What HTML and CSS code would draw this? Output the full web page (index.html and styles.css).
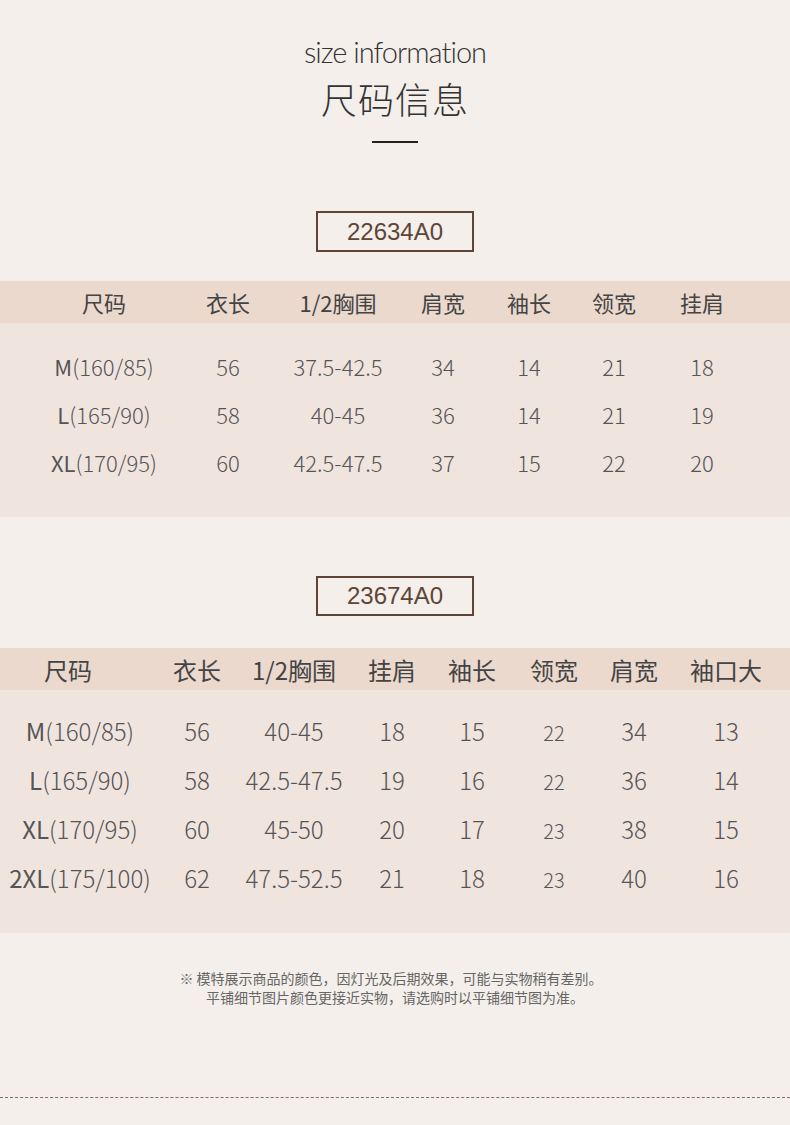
FILE: index.html
```html
<!DOCTYPE html>
<html lang="zh">
<head>
<meta charset="utf-8">
<link rel="stylesheet" href="styles.css">
</head>
<body>
<div class="page">
  <header class="title">
    <div class="en">size information</div>
    <div class="cn">尺码信息</div>
    <div class="rule"></div>
  </header>

  <section class="block block1">
    <div class="code"><span>22634A0</span></div>
    <div class="thead t1">
      <div>尺码</div><div>衣长</div><div>1/2胸围</div><div>肩宽</div><div>袖长</div><div>领宽</div><div>挂肩</div>
    </div>
    <div class="tbody b1">
      <div class="row t1"><div><b>M</b>(160/85)</div><div>56</div><div>37.5-42.5</div><div>34</div><div>14</div><div>21</div><div>18</div></div>
      <div class="row t1"><div><b>L</b>(165/90)</div><div>58</div><div>40-45</div><div>36</div><div>14</div><div>21</div><div>19</div></div>
      <div class="row t1"><div><b>XL</b>(170/95)</div><div>60</div><div>42.5-47.5</div><div>37</div><div>15</div><div>22</div><div>20</div></div>
    </div>
  </section>

  <section class="block block2">
    <div class="code"><span>23674A0</span></div>
    <div class="thead t2">
      <div class="first">尺码</div><div>衣长</div><div>1/2胸围</div><div>挂肩</div><div>袖长</div><div>领宽</div><div>肩宽</div><div>袖口大</div>
    </div>
    <div class="tbody b2">
      <div class="row t2"><div><b>M</b>(160/85)</div><div>56</div><div>40-45</div><div>18</div><div>15</div><div class="sm">22</div><div>34</div><div>13</div></div>
      <div class="row t2"><div><b>L</b>(165/90)</div><div>58</div><div>42.5-47.5</div><div>19</div><div>16</div><div class="sm">22</div><div>36</div><div>14</div></div>
      <div class="row t2"><div><b>XL</b>(170/95)</div><div>60</div><div>45-50</div><div>20</div><div>17</div><div class="sm">23</div><div>38</div><div>15</div></div>
      <div class="row t2"><div><b>2XL</b>(175/100)</div><div>62</div><div>47.5-52.5</div><div>21</div><div>18</div><div class="sm">23</div><div>40</div><div>16</div></div>
    </div>
  </section>

  <footer class="note">
    <p>※ 模特展示商品的颜色，因灯光及后期效果，可能与实物稍有差别。</p>
    <p>平铺细节图片颜色更接近实物，请选购时以平铺细节图为准。</p>
  </footer>

  <div class="dash"></div>
</div>
</body>
</html>
```

FILE: styles.css
```css
html, body {
  margin: 0;
  padding: 0;
  background: #f4efea;
}
.page {
  width: 790px;
  height: 1125px;
  overflow: hidden;
  font-family: "Noto Sans CJK SC", "Noto Sans", sans-serif;
  color: #555;
}
.title {
  display: flex;
  flex-direction: column;
  align-items: center;
  padding-top: 34px;
}
.title .en {
  font-family: "Lato", "DejaVu Sans", sans-serif;
  font-weight: 300;
  font-size: 29px;
  line-height: 36px;
  letter-spacing: -1px;
  color: #333;
}
.title .cn {
  font-weight: 300;
  font-size: 36px;
  line-height: 46px;
  margin-top: 5px;
  color: #333;
  letter-spacing: 1px;
}
.title .rule {
  width: 46px;
  height: 2px;
  background: #222;
  margin-top: 20px;
}
.block {
  display: flex;
  flex-direction: column;
}
.block1 { margin-top: 68px; }
.block2 { margin-top: 59px; }
.code {
  display: flex;
  justify-content: center;
}
.code span {
  box-sizing: border-box;
  width: 158px;
  height: 41px;
  border: 2px solid #5e4537;
  color: #5e4537;
  font-family: "Liberation Sans", sans-serif;
  font-size: 24px;
  line-height: 37px;
  text-align: center;
}
.block2 .code span { height: 40px; line-height: 36px; }
.thead {
  background: #ebd9ce;
  height: 42px;
  align-items: center;
  color: #444;
  font-size: 22px;
  font-weight: 400;
  margin-top: 29px;
}
.block2 .thead { margin-top: 32px; }
.thead, .row {
  display: grid;
  text-align: center;
}
.t1 {
  grid-template-columns: 128px 120px 100px 110px 62px 108px 68px;
  padding-left: 40px;
}
.t2 {
  grid-template-columns: 160px 74px 120px 76px 84px 80px 80px 104px;
}
.thead.t2 { font-size: 24px; }
.thead .first { padding-right: 24px; }
.tbody {
  background: #f0e4df;
  display: flex;
  flex-direction: column;
}
.b1 { padding: 19px 0 31px; }
.b2 { padding: 16px 0 31px; }
.row {
  align-items: center;
  font-weight: 300;
  color: #555;
}
.b1 .row { height: 48px; font-size: 22px; }
.b2 .row { height: 49px; font-size: 24px; }
.row b { font-weight: 400; color: #555; }
.row .sm { font-size: 20px; padding-top: 4px; }
.note {
  margin-top: 36px;
  text-align: center;
  font-size: 14px;
  color: #666;
  line-height: 19px;
}
.note p { margin: 0; }
.note p:first-child { padding-right: 8px; }
.dash {
  margin-top: 90px;
  border-top: 1px dashed #7a716c;
}
```
